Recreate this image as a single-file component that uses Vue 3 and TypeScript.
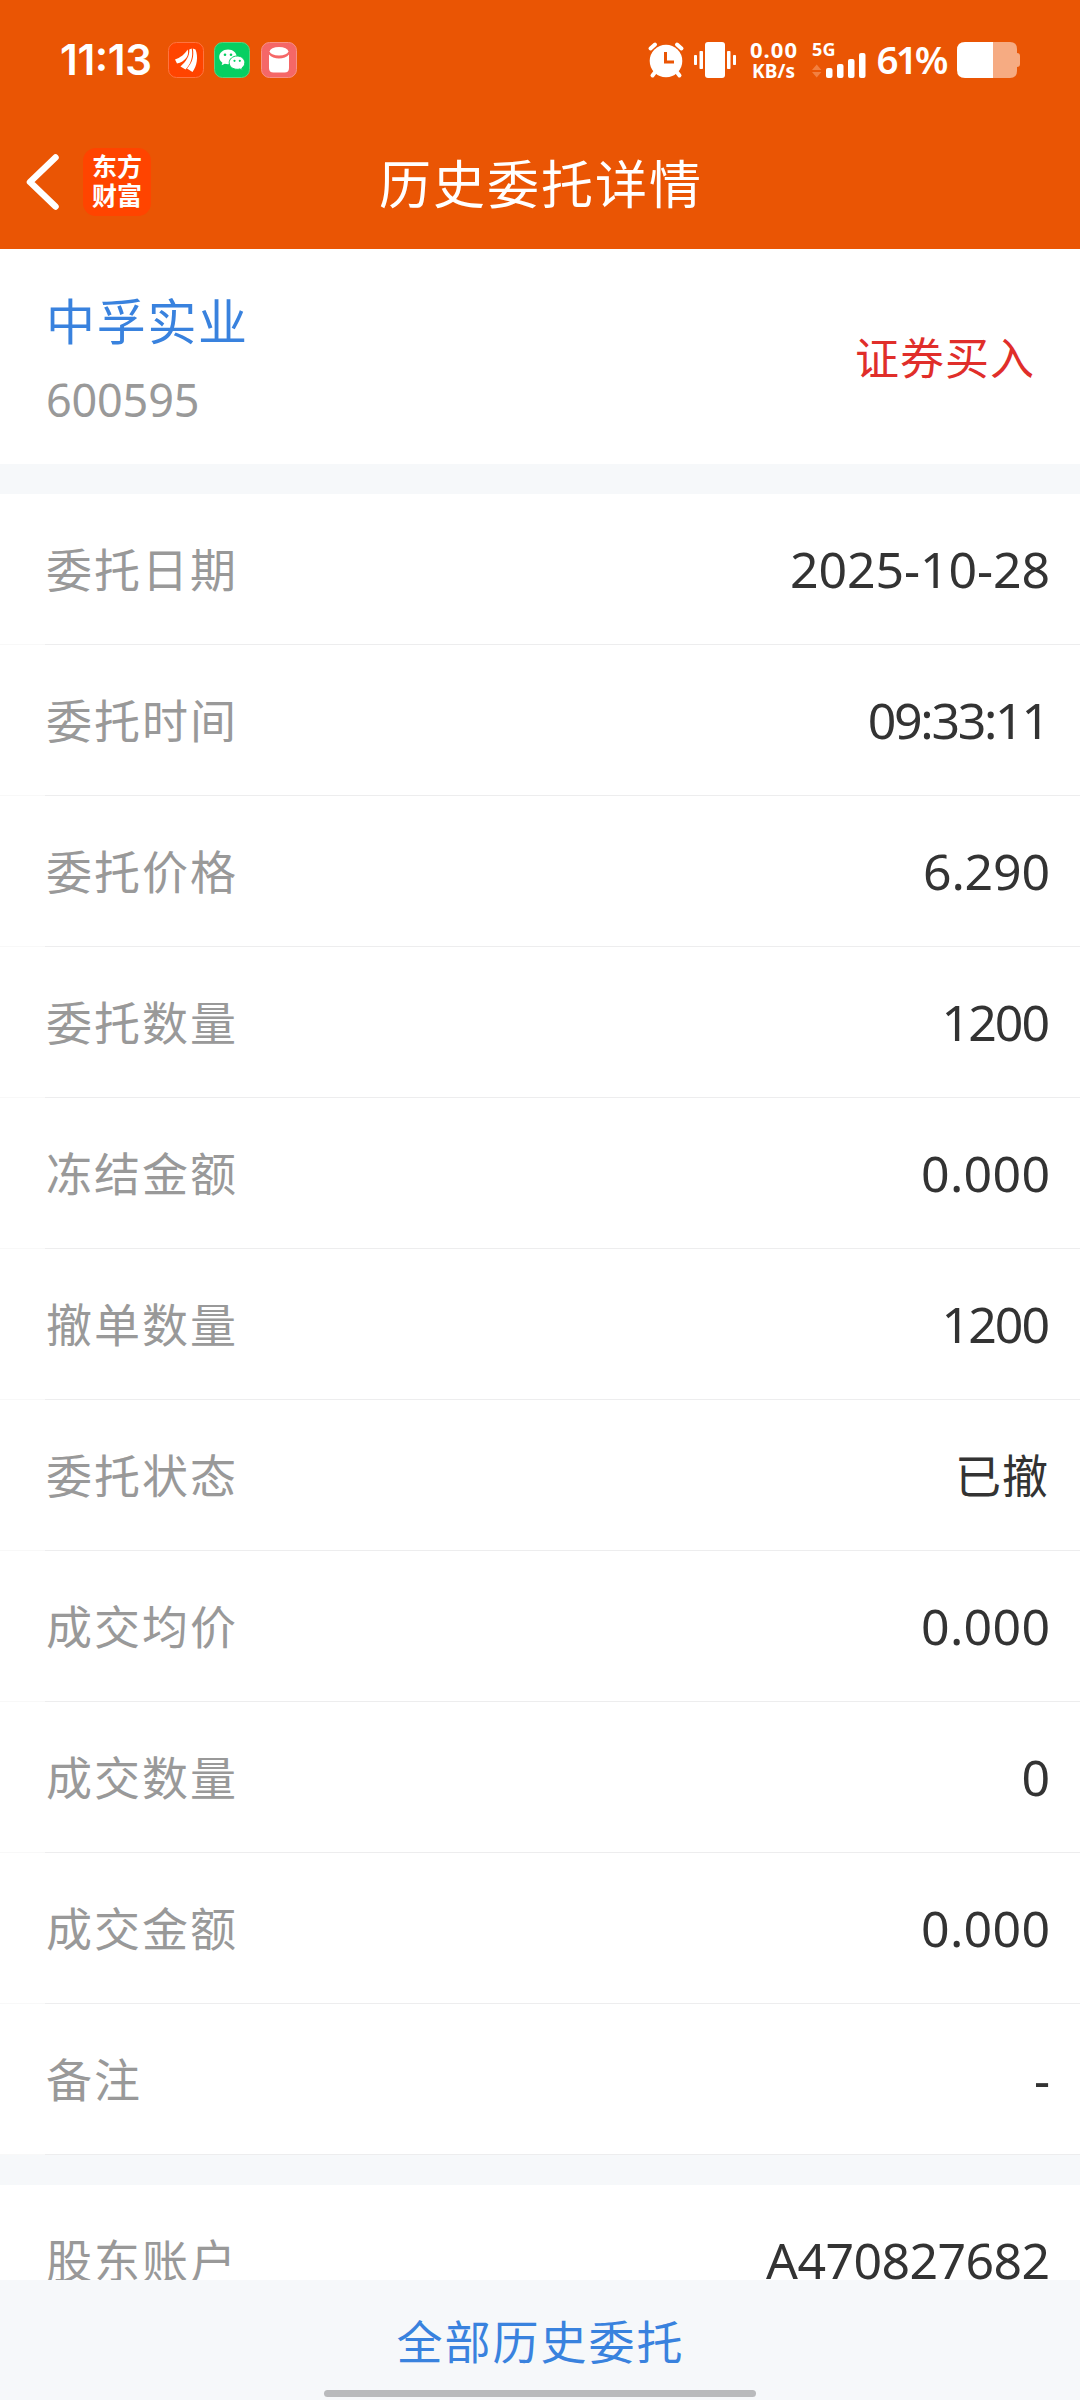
<script setup lang="ts">
interface Row {
  label: string
  value: string
  /** Extra tracking in pixels between the value's characters. */
  spacing: number
}

const rows: Row[] = [
  { label: '委托日期', value: '2025-10-28', spacing: -0.1 },
  { label: '委托时间', value: '09:33:11', spacing: -2.3 },
  { label: '委托价格', value: '6.290', spacing: -0.2 },
  { label: '委托数量', value: '1200', spacing: -2 },
  { label: '冻结金额', value: '0.000', spacing: 0.3 },
  { label: '撤单数量', value: '1200', spacing: -2 },
  { label: '委托状态', value: '已撤', spacing: 1 },
  { label: '成交均价', value: '0.000', spacing: 0.3 },
  { label: '成交数量', value: '0', spacing: 0 },
  { label: '成交金额', value: '0.000', spacing: 0.3 },
  { label: '备注', value: '-', spacing: 0 },
]

const accountRows: Row[] = [{ label: '股东账户', value: 'A470827682', spacing: -0.6 }]

const isCjk = (text: string): boolean => /[\u4e00-\u9fff]/.test(text)

const tracking = (row: Row) => ({
  letterSpacing: `${row.spacing}px`,
  marginRight: `${-row.spacing}px`,
})
</script>

<template>
  <div class="screen">
    <header class="header">
      <div class="status">
        <div class="status-left">
          <svg class="clock" width="94" height="36" viewBox="0 0 94 36">
            <text x="0" y="32.500" textLength="92" font-size="42" font-weight="600">11:13</text>
          </svg>
          <svg width="36" height="36" viewBox="0 0 36 36">
            <rect x=".5" y=".5" width="35" height="35" rx="8" fill="#ff4400" stroke="#ff7440" />
            <path d="M7 17.500C12 16 17 12 19.500 7.500C22 13 17 20 9 21.500Z" fill="#fff" />
            <path d="M12.500 24.500C18 19.500 21.800 14 21.300 7.500L23.700 6.500C25.500 15 22.500 22.500 17.500 27.500Z" fill="#fff" />
            <path d="M24.800 6.500L27.500 7.500C30.500 15 29 24 24.500 30L19 26.500C24.300 21 26.300 14 24.800 6.500Z" fill="#fff" />
          </svg>
          <svg width="36" height="36" viewBox="0 0 36 36">
            <rect x=".5" y=".5" width="35" height="35" rx="8" fill="#06cf62" stroke="#5fd17c" />
            <path d="M14 7.500c-5 0-8.800 3.300-8.800 7.500 0 2.400 1.200 4.300 3.200 5.700l-.8 2.600 3.200-1.600c1 .3 2.100.5 3.200.5 5 0 8.800-3.200 8.800-7.200S19 7.500 14 7.500Z" fill="#fff" />
            <path d="M23.200 14c-4.600 0-8 3-8 6.700s3.400 6.600 8 6.600c1 0 1.900-.1 2.700-.4l2.600 1.400-.7-2.300c1.900-1.300 3-3.100 3-5.300 0-3.700-3.200-6.700-7.600-6.700Z" fill="#fff" stroke="#06cf62" />
            <g fill="#06cf62">
              <circle cx="11" cy="12.800" r="1.300" /><circle cx="17" cy="12.800" r="1.300" />
              <circle cx="20.500" cy="18.800" r="1.100" /><circle cx="25.800" cy="18.800" r="1.100" />
            </g>
          </svg>
          <svg width="36" height="36" viewBox="0 0 36 36">
            <rect x=".5" y=".5" width="35" height="35" rx="8" fill="#f56767" stroke="#f79084" />
            <path d="M8 12.500C12 17.800 24 17.800 28 12.500V26q0 4.500-4.500 4.500h-11Q8 30.500 8 26Z" fill="#fff" />
            <ellipse cx="18" cy="9.300" rx="9.300" ry="4.300" fill="#fff" />
          </svg>
        </div>
        <div class="status-right">
          <svg class="alarm" width="36" height="36" viewBox="0 0 36 36">
            <g stroke="#fff" stroke-width="4" stroke-linecap="round">
              <path d="M2.500 6.500L7 2.500M29 2.500L33.500 6.500M8 29L4.500 33.500M28 29L31.500 33.500" />
            </g>
            <circle cx="18" cy="19" r="16.300" fill="#fff" />
            <path d="M17.500 10V20H26" fill="none" stroke="#ea5504" stroke-width="3" />
          </svg>
          <svg class="vibrate" width="42" height="36" viewBox="0 0 42 36">
            <g fill="#fff">
              <rect x="0" y="13" width="3" height="10" rx=".8" /><rect x="5.500" y="9" width="3.500" height="18" rx=".8" />
              <rect x="11" y="0" width="20" height="36" rx="3" />
              <rect x="33" y="9" width="3.500" height="18" rx=".8" /><rect x="39" y="13" width="3" height="10" rx=".8" />
            </g>
          </svg>
          <svg class="speed" width="48" height="38" viewBox="0 0 48 38">
            <text x="0" y="16" textLength="47" font-size="22" font-weight="700">0.00</text>
            <text x="2" y="35.500" textLength="43" font-size="19" font-weight="700">KB/s</text>
          </svg>
          <svg class="signal" width="54" height="36" viewBox="0 0 54 36">
            <text x="0" y="13.500" textLength="23.500" font-size="18" font-weight="700">5G</text>
            <path d="M0 28L4.700 22.500L9.400 28ZM0 30L4.700 35.500L9.400 30Z" fill="#f28040" />
            <g fill="#fff">
              <rect x="14" y="26" width="6.500" height="10" rx="2" /><rect x="25" y="22" width="6.500" height="14" rx="2" />
              <rect x="36" y="17" width="6.500" height="19" rx="2" /><rect x="47" y="11" width="6.500" height="25" rx="2" />
            </g>
          </svg>
          <svg class="percent" width="72" height="36" viewBox="0 0 72 36">
            <text x="-.5" y="32" textLength="72" font-size="38.500" font-weight="600">61%</text>
          </svg>
          <svg class="battery" width="63" height="36" viewBox="0 0 63 36">
            <path d="M36 0H53Q60 0 60 7V11Q63 11 63 14V22Q63 25 60 25V29Q60 36 53 36H36Z" fill="#f6ab82" />
            <path d="M36 0H8Q0 0 0 8V28Q0 36 8 36H36Z" fill="#fff" />
          </svg>
        </div>
      </div>
      <nav class="nav">
        <div class="nav-side">
          <svg class="back" width="33" height="56" viewBox="0 0 33 56">
            <path d="M29.500 3.500L4 28L29.500 52.500" fill="none" stroke="#fff" stroke-width="6.500" stroke-linecap="round" stroke-linejoin="round" />
          </svg>
          <div class="logo"><span>东方</span><span>财富</span></div>
        </div>
        <h1 class="title">历史委托详情</h1>
        <div class="nav-side"></div>
      </nav>
    </header>

    <main class="content">
      <section class="stock">
        <div>
          <div class="stock-name">中孚实业</div>
          <div class="stock-code">600595</div>
        </div>
        <div class="side">证券买入</div>
      </section>
      <div class="band"></div>
      <section>
        <div v-for="row in rows" :key="row.label" class="row">
          <span class="label">{{ row.label }}</span>
          <span class="value" :class="{ cjk: isCjk(row.value) }" :style="tracking(row)">{{ row.value }}</span>
        </div>
      </section>
      <div class="band"></div>
      <section>
        <div v-for="row in accountRows" :key="row.label" class="row">
          <span class="label">{{ row.label }}</span>
          <span class="value" :style="tracking(row)">{{ row.value }}</span>
        </div>
      </section>
    </main>

    <footer class="footer">
      <div class="all">全部历史委托</div>
      <div class="home"></div>
    </footer>
  </div>
</template>

<style>
body {
  background: #fff;
}
</style>

<style scoped>
.screen {
  width: 1080px;
  height: 2400px;
  display: flex;
  flex-direction: column;
  overflow: hidden;
  background: #fff;
  color: #333;
  font-family: "Noto Sans", "Noto Sans CJK SC", sans-serif;
  white-space: nowrap;
}
svg {
  display: block;
  flex: none;
  overflow: visible;
}
svg text {
  fill: #fff;
  font-family: "Noto Sans", sans-serif;
}
svg.clock text {
  font-family: Inter, sans-serif;
}
.header {
  flex: none;
  height: 249px;
  background: #ea5504;
  color: #fff;
}
.status {
  height: 119px;
  box-sizing: border-box;
  padding: 42px 60px 0 60px;
  display: flex;
  justify-content: space-between;
}
.status-left {
  display: flex;
  gap: 10.5px;
}
.clock {
  margin-right: 3px;
}
.status-right {
  display: flex;
}
.vibrate {
  margin-left: 10px;
}
.speed {
  margin-left: 14px;
}
.signal {
  margin-left: 14px;
}
.percent {
  margin-left: 11px;
}
.battery {
  margin-left: 8px;
}
.nav {
  height: 125px;
  display: flex;
  align-items: center;
  justify-content: space-between;
}
.nav-side {
  width: 300px;
  display: flex;
  align-items: center;
}
.back {
  margin-left: 26px;
}
.logo {
  width: 68px;
  height: 68px;
  box-sizing: border-box;
  padding-bottom: 3px;
  margin-left: 24px;
  border-radius: 13px;
  background: #ff4400;
  display: flex;
  flex-direction: column;
  align-items: center;
  justify-content: center;
  font: 700 25px/29px "Noto Sans CJK SC", sans-serif;
}
.title {
  margin: 0;
  padding-left: 2px;
  font: 400 52px/80px "Noto Sans CJK SC", sans-serif;
  letter-spacing: 2px;
}
.content {
  flex: 1;
  min-height: 0;
  overflow: hidden;
}
.stock {
  height: 215px;
  box-sizing: border-box;
  padding: 0 45px 0 46px;
  display: flex;
  justify-content: space-between;
  align-items: center;
}
.stock-name {
  padding-top: 8px;
  font: 400 49px/78px "Noto Sans CJK SC", sans-serif;
  letter-spacing: 1.7px;
  color: #3982de;
}
.stock-code {
  font-size: 45px;
  line-height: 84px;
  letter-spacing: -0.2px;
  color: #999;
}
.side {
  padding-bottom: 1px;
  font: 400 44px/70px "Noto Sans CJK SC", sans-serif;
  letter-spacing: 1px;
  color: #e02e2a;
}
.band {
  height: 30px;
  background: #f6f8fa;
}
.row {
  height: 151px;
  box-sizing: border-box;
  padding: 0 30px 5px 46px;
  display: flex;
  justify-content: space-between;
  align-items: center;
  background: linear-gradient(90deg, #f8f8f8 45px, #ededee 45px) bottom / 100% 1px no-repeat;
}
.label {
  font: 400 46px/70px "Noto Sans CJK SC", sans-serif;
  letter-spacing: 2px;
  color: #999;
}
.value {
  padding-top: 4px;
  font-size: 50px;
  line-height: 70px;
}
.value.cjk {
  padding: 0 2px 0 0;
  font: 400 46px/70px "Noto Sans CJK SC", sans-serif;
}
.footer {
  flex: none;
  height: 120px;
  display: flex;
  flex-direction: column;
  align-items: center;
  background: #f6f8fa;
}
.all {
  height: 110px;
  padding-left: 1px;
  font: 400 46px/118px "Noto Sans CJK SC", sans-serif;
  letter-spacing: 2px;
  color: #3982de;
}
.home {
  width: 432px;
  height: 7px;
  border-radius: 4px;
  background: #b9babc;
}
</style>
